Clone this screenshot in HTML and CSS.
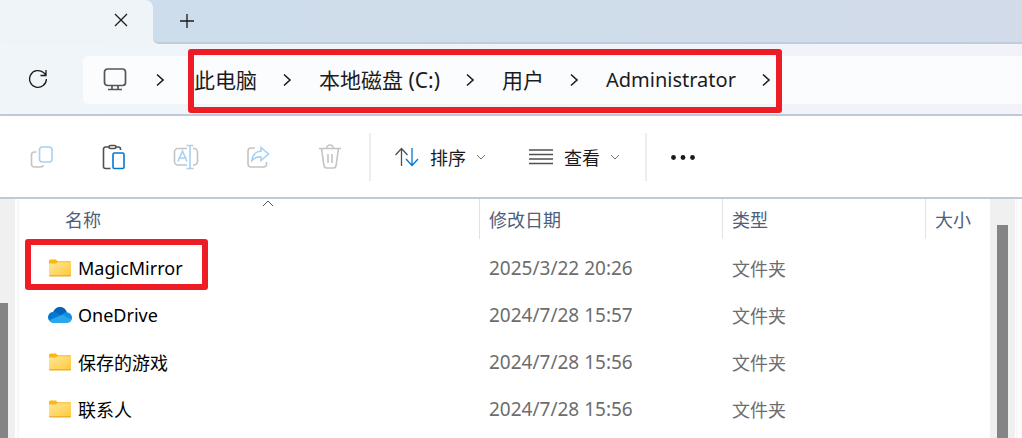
FILE: index.html
```
<!DOCTYPE html>
<html lang="zh-CN">
<head>
    <meta charset="UTF-8">
    <meta name="viewport" content="width=device-width, initial-scale=1.0">
    <title>Administrator</title>
    <link rel="stylesheet" href="styles.css">
</head>
<body>
    <header class="tabs">
        <div class="tab">
            <button class="icon-btn" aria-label="关闭">
                <svg width="14" height="14" viewBox="0 0 14 14"><path d="M1 1l12 12M13 1L1 13"/></svg>
            </button>
        </div>
        <div class="tabs-rest">
            <button class="icon-btn" aria-label="新标签页">
                <svg width="16" height="16" viewBox="0 0 16 16"><path d="M8 1v14M1 8h14"/></svg>
            </button>
        </div>
    </header>

    <div class="address-row">
        <button class="icon-btn" aria-label="刷新">
            <svg width="20" height="20" viewBox="0 0 20 20"><path d="M18.400 10A8.400 8.400 0 1 1 15.500 3.600L18 6M18 1v5.500h-5.500"/></svg>
        </button>
        <nav class="address">
            <svg class="monitor" width="24" height="24" viewBox="0 0 24 24"><rect x="1.500" y="1" width="21" height="16.500" rx="3"/><path d="M9 17.500v4M15 17.500v4M5 21.500h14"/></svg>
            <svg class="chevron" width="12" height="16" viewBox="0 0 12 16"><path d="M3 2.500l6 5.500-6 5.500"/></svg>
            <div class="crumbs">
                <button class="crumb">此电脑</button>
                <svg class="chevron" width="12" height="16" viewBox="0 0 12 16"><path d="M3 2.500l6 5.500-6 5.500"/></svg>
                <button class="crumb">本地磁盘 (C:)</button>
                <svg class="chevron" width="12" height="16" viewBox="0 0 12 16"><path d="M3 2.500l6 5.500-6 5.500"/></svg>
                <button class="crumb">用户</button>
                <svg class="chevron" width="12" height="16" viewBox="0 0 12 16"><path d="M3 2.500l6 5.500-6 5.500"/></svg>
                <button class="crumb user">Administrator</button>
                <svg class="chevron last" width="12" height="16" viewBox="0 0 12 16"><path d="M3 2.500l6 5.500-6 5.500"/></svg>
                <span class="mark mark-path"></span>
            </div>
        </nav>
    </div>

    <div class="toolbar">
        <div class="tools">
            <button class="icon-btn" aria-label="复制" disabled>
                <svg width="24" height="24" viewBox="0 0 24 24"><path class="grey" d="M6.500 7H4.500a3 3 0 0 0-3 3v9a3 3 0 0 0 3 3h6a3 3 0 0 0 3-2"/><rect class="pale" x="9.500" y="2" width="12.500" height="15" rx="3"/></svg>
            </button>
            <button class="icon-btn" aria-label="粘贴">
                <svg width="24" height="26" viewBox="0 0 24 26"><path class="dark" d="M7 3H3.500a2 2 0 0 0-2 2v17.500a2 2 0 0 0 2 2H8.500M14 3h2.500a2 2 0 0 1 2 2v1"/><rect class="dark" x="7" y="1.500" width="7" height="3" rx="1.500"/><rect class="blue" x="11" y="9" width="11" height="15.500" rx="1.500"/></svg>
            </button>
            <button class="icon-btn" aria-label="重命名" disabled>
                <svg width="26" height="26" viewBox="0 0 26 26"><path class="grey" d="M14 4.500H5A3.500 3.500 0 0 0 1.500 8v9.500A3.500 3.500 0 0 0 5 21h9M20 4.500h1A3.500 3.500 0 0 1 24.500 8v9.500A3.500 3.500 0 0 1 21 21h-1"/><path class="pale" d="M5 17.500l4.500-10.500L14 17.500M6.500 14h6M17 1.500v23M13.500 1.500h7M13.500 24.500h7"/></svg>
            </button>
            <button class="icon-btn" aria-label="共享" disabled>
                <svg width="24" height="24" viewBox="0 0 24 24"><path class="grey" d="M9 3H5a3 3 0 0 0-3 3v13a3 3 0 0 0 3 3h12.500a3 3 0 0 0 3-3v-2"/><path class="pale" d="M15 2.500L22.500 9 15 15.500V12C10.500 11.500 8 13 6 15.500 6.500 9.500 10 6.500 15 6z"/></svg>
            </button>
            <button class="icon-btn" aria-label="删除" disabled>
                <svg width="24" height="26" viewBox="0 0 24 26"><path class="grey" d="M1 4.500h22M8.500 4.500a3.500 3.500 0 0 1 7 0M3.500 4.500l2.500 17.500a2.500 2.500 0 0 0 2.500 2h7a2.500 2.500 0 0 0 2.500-2L20.500 4.500M10 10v9M14 10v9"/></svg>
            </button>
        </div>
        <div class="menus">
            <button class="menu-btn">
                <svg width="26" height="20" viewBox="0 0 26 20"><path class="dark" d="M7.500 19V2M1.500 8L7.500 1.500 13.500 8"/><path class="blue" d="M18 1v17M12 12l6 6.500 6-6.500"/></svg>
                排序
                <svg class="down" width="10" height="8" viewBox="0 0 10 8"><path d="M1 2l4 4 4-4"/></svg>
            </button>
            <button class="menu-btn">
                <svg width="26" height="20" viewBox="0 0 26 20"><path class="dark" d="M1 3h24M1 7.500h24M1 12h24M1 16.500h24"/></svg>
                查看
                <svg class="down" width="10" height="8" viewBox="0 0 10 8"><path d="M1 2l4 4 4-4"/></svg>
            </button>
        </div>
        <button class="icon-btn more" aria-label="更多">
            <svg width="26" height="8" viewBox="0 0 26 8"><circle cx="3.500" cy="4.500" r="2.400"/><circle cx="13" cy="4.500" r="2.400"/><circle cx="22.500" cy="4.500" r="2.400"/></svg>
        </button>
    </div>

    <main class="content">
        <div class="scroll scroll-left"><div class="thumb"></div></div>
        <div class="files">
            <table>
                <thead>
                    <tr>
                        <th class="name">名称
                            <svg class="sort" width="12" height="8" viewBox="0 0 12 8"><path d="M1 7l5-5 5 5"/></svg>
                        </th>
                        <th class="date">修改日期</th>
                        <th class="type">类型</th>
                        <th class="size">大小</th>
                    </tr>
                </thead>
                <tbody>
                    <tr>
                        <td class="name">
                            <div class="file">
                                <svg width="24" height="20" viewBox="0 0 24 20"><use href="#folder"/></svg>MagicMirror
                                <span class="mark mark-file"></span>
                            </div>
                        </td>
                        <td class="time">2025/3/22 20:26</td>
                        <td>文件夹</td>
                        <td></td>
                    </tr>
                    <tr>
                        <td class="name">
                            <div class="file">
                                <svg width="24" height="20" viewBox="0 0 24 20">
                                    <path fill="#0364b8" d="M5 7.500C6 4 9 2 12 2c3.500 0 6 2 7 5.500L16 13 7 10z"/>
                                    <path fill="#0078d4" d="M5 17.500A5.200 5.200 0 0 1 5.500 7C7.500 6.800 9 7.500 10.500 8.500L16 12l-9 5.500z"/>
                                    <path fill="#1490df" d="M13.500 10.500C15 8 16.500 7.300 18.500 7.300A5.400 5.400 0 0 1 23.500 15L14 13z"/>
                                    <path fill="#28a8ea" d="M1 15.200L14 9.800l9.600 4.800a4.600 4.600 0 0 1-4.100 3.400H5.500A5 5 0 0 1 1 15.200z"/>
                                </svg>OneDrive
                            </div>
                        </td>
                        <td class="time">2024/7/28 15:57</td>
                        <td>文件夹</td>
                        <td></td>
                    </tr>
                    <tr>
                        <td class="name">
                            <div class="file">
                                <svg width="24" height="20" viewBox="0 0 24 20"><use href="#folder"/></svg>保存的游戏
                            </div>
                        </td>
                        <td class="time">2024/7/28 15:56</td>
                        <td>文件夹</td>
                        <td></td>
                    </tr>
                    <tr>
                        <td class="name">
                            <div class="file">
                                <svg width="24" height="20" viewBox="0 0 24 20"><use href="#folder"/></svg>联系人
                            </div>
                        </td>
                        <td class="time">2024/7/28 15:56</td>
                        <td>文件夹</td>
                        <td></td>
                    </tr>
                </tbody>
            </table>
        </div>
        <div class="scroll scroll-right"><div class="thumb"></div></div>
        <div class="edge"></div>
    </main>

    <svg class="defs" width="0" height="0">
        <defs>
            <linearGradient id="folderFill" x1="0" y1="0" x2="1" y2="1">
                <stop offset="0" stop-color="#ffe69b"/>
                <stop offset="1" stop-color="#ffc937"/>
            </linearGradient>
            <g id="folder">
                <path fill="#fbb716" d="M1 3a1.500 1.500 0 0 1 1.500-1.500H8L9.500 3.300H22a1 1 0 0 1 1 1V8H1z"/>
                <path fill="url(#folderFill)" d="M1 5.500h7l1.500-1.200H23V18H1z"/>
                <path fill="#eaa921" d="M1 17.300h22v.200a1 1 0 0 1-1 1H2a1 1 0 0 1-1-1z"/>
            </g>
        </defs>
    </svg>
</body>
</html>
```
FILE: styles.css
```
*{
    margin: 0;
    padding: 0;
    box-sizing: border-box;
}
body{
    height: 100vh;
    display: flex;
    flex-direction: column;
    overflow: hidden;
    background-color: white;
    color: #1b1b1b;
    font-family: "Noto Sans", "Noto Sans CJK SC", sans-serif;
    font-size: 18px;
}
button{
    border: none;
    background: none;
    font: inherit;
    color: inherit;
    white-space: nowrap;
}
svg{
    display: block;
    flex: none;
    fill: none;
    stroke: #1b1b1b;
    stroke-width: 1.3;
}
.icon-btn{
    display: flex;
}

/* tabs */
.tabs{
    display: flex;
    height: 44px;
    flex: none;
    background: linear-gradient(#cdddeb, #cdddeb) 0 0 / 100% 12px no-repeat #eff4f9;
}
.tab{
    width: 153px;
    display: flex;
    align-items: center;
    justify-content: flex-end;
    padding: 0 25px 4px 0;
    border-radius: 0 8px 0 0;
    background-color: #eff4f9;
}
.tabs-rest{
    flex: 1;
    display: flex;
    align-items: center;
    padding-left: 26px;
    border-bottom: 2px solid #bfccdc;
    border-bottom-left-radius: 6px;
    background: linear-gradient(to right, #cdddeb, #d2dbea);
}

/* address bar */
.address-row{
    display: flex;
    align-items: center;
    flex: none;
    height: 72px;
    padding-left: 28px;
    border-bottom: 2px solid #bfcad9;
    background: linear-gradient(to right, #eff5f9, #f1f3f9);
}
.address{
    flex: 1;
    display: flex;
    align-items: center;
    height: 48px;
    margin: 2px 0 0 35px;
    padding-left: 20px;
    border-radius: 6px 0 0 6px;
    background-color: #fbfcfe;
}
.monitor{
    stroke: #555;
    stroke-width: 1.7;
}
.chevron{
    margin: 0 26px 0 24px;
    stroke-width: 1.6;
}
.monitor + .chevron{
    margin: 0 28px 0 27px;
}
.crumbs{
    position: relative;
    display: flex;
    align-items: center;
    height: 48px;
}
.crumb{
    font-size: 21px;
    line-height: 32px;
}
.crumb.user{
    font-size: 20px;
}
.chevron.last{
    margin-right: 0;
}
.mark{
    position: absolute;
    border: 6px solid #ee1c25;
    border-radius: 3px;
    pointer-events: none;
}
.mark-path{
    inset: -7px -10px -9px -6px;
}

/* toolbar */
.toolbar{
    display: flex;
    align-items: center;
    flex: none;
    height: 83px;
    border-bottom: 2px solid #bfcad9;
}
.tools{
    display: flex;
    align-items: center;
    gap: 48px;
    height: 48px;
    padding: 0 27px 0 30px;
    border-right: 2px solid #ededed;
}
.tools .icon-btn{
    width: 24px;
    justify-content: center;
}
.tools svg{
    stroke-width: 1.6;
}
.menus{
    display: flex;
    align-items: center;
    gap: 42px;
    height: 48px;
    padding: 0 25px 0 23px;
    border-right: 2px solid #ededed;
}
.menu-btn{
    display: flex;
    align-items: center;
    gap: 10px;
}
.grey{
    stroke: #c4c4c4;
}
.pale{
    stroke: #a6d1f3;
}
.dark{
    stroke: #505050;
}
.blue{
    stroke: #0078d4;
}
.down{
    stroke: #777;
    stroke-width: 1;
}
.more{
    margin-left: 23px;
}
.more svg{
    fill: #1b1b1b;
    stroke: none;
}

/* file list */
.content{
    flex: 1;
    display: flex;
    min-height: 0;
}
.scroll{
    flex: none;
    background-color: #f0f0f0;
}
.thumb{
    height: 100%;
    background-color: #858585;
}
.scroll-left{
    width: 15px;
    padding: 104px 7px 0 0;
}
.scroll-right{
    width: 25px;
    padding: 26px 7px 0;
}
.edge{
    width: 7px;
    border-left: 1px solid white;
    background: linear-gradient(to right, #f7f7f7 2px, white 2px, white 4px, #fafafa 4px);
}
.files{
    flex: 1;
    margin-left: 2px;
    border-left: 2px solid #f7f7f7;
}
table{
    width: 100%;
    table-layout: fixed;
    border-collapse: separate;
    border-spacing: 0;
}
thead tr{
    height: 40px;
}
th{
    padding-left: 9px;
    border-left: 1px solid #e2e2e2;
    color: #4c607a;
    font-weight: 400;
    text-align: left;
}
th.name{
    position: relative;
    width: 460px;
    padding-left: 46px;
    border-left: none;
}
th.date{
    width: 243px;
}
th.type{
    width: 203px;
}
.sort{
    position: absolute;
    top: 0;
    left: 243px;
    stroke: #555;
    stroke-width: 1;
}
tbody tr{
    height: 47px;
}
tbody::before{
    content: "";
    display: block;
    height: 5px;
}
td{
    padding-left: 10px;
    color: #6d6d6d;
}
td.name{
    padding-left: 29px;
    color: #000;
}
.time{
    font-size: 19px;
}
.file{
    position: relative;
    display: flex;
    align-items: center;
    gap: 6px;
    width: max-content;
}
.file svg{
    stroke: none;
}
.mark-file{
    inset: -17px -25px -10px -23px;
}
.defs{
    position: absolute;
}
```
